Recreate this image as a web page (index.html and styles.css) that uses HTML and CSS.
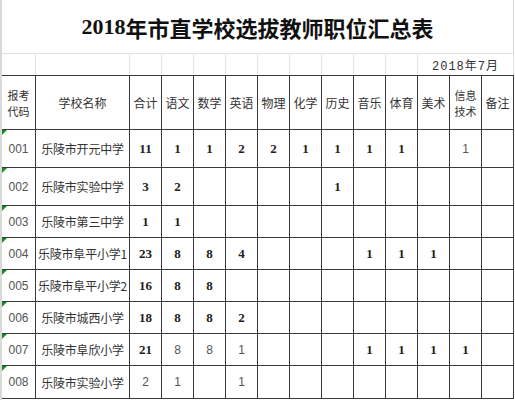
FILE: index.html
```html
<!DOCTYPE html>
<html lang="zh">
<head>
<meta charset="utf-8">
<link rel="stylesheet" href="styles.css">
</head>
<body>
<div class="sheet">
  <div class="title"><span class="num">2018</span><span class="cjk">年市直学校选拔教师职位汇总表</span></div>
  <div class="daterow">
    <div></div><div></div><div></div><div></div><div></div><div></div><div></div><div></div><div></div><div></div><div></div>
    <div class="date">2018年7月</div>
  </div>
  <div class="table">
    <div class="hd two"><span>报考</span><span>代码</span></div><div class="hd">学校名称</div><div class="hd">合计</div><div class="hd">语文</div><div class="hd">数学</div><div class="hd">英语</div><div class="hd">物理</div><div class="hd">化学</div><div class="hd">历史</div><div class="hd">音乐</div><div class="hd">体育</div><div class="hd">美术</div><div class="hd two"><span>信息</span><span>技术</span></div><div class="hd">备注</div>

    <div class="code">001</div><div class="name">乐陵市开元中学</div><div class="b">11</div><div class="b">1</div><div class="b">1</div><div class="b">2</div><div class="b">2</div><div class="b">1</div><div class="b">1</div><div class="b">1</div><div class="b">1</div><div></div><div class="t">1</div><div></div>

    <div class="code">002</div><div class="name">乐陵市实验中学</div><div class="b">3</div><div class="b">2</div><div></div><div></div><div></div><div></div><div class="b">1</div><div></div><div></div><div></div><div></div><div></div>

    <div class="code">003</div><div class="name">乐陵市第三中学</div><div class="b">1</div><div class="b">1</div><div></div><div></div><div></div><div></div><div></div><div></div><div></div><div></div><div></div><div></div>

    <div class="code">004</div><div class="name">乐陵市阜平小学1</div><div class="b">23</div><div class="b">8</div><div class="b">8</div><div class="b">4</div><div></div><div></div><div></div><div class="b">1</div><div class="b">1</div><div class="b">1</div><div></div><div></div>

    <div class="code">005</div><div class="name">乐陵市阜平小学2</div><div class="b">16</div><div class="b">8</div><div class="b">8</div><div></div><div></div><div></div><div></div><div></div><div></div><div></div><div></div><div></div>

    <div class="code">006</div><div class="name">乐陵市城西小学</div><div class="b">18</div><div class="b">8</div><div class="b">8</div><div class="b">2</div><div></div><div></div><div></div><div></div><div></div><div></div><div></div><div></div>

    <div class="code">007</div><div class="name">乐陵市阜欣小学</div><div class="b">21</div><div class="t">8</div><div class="t">8</div><div class="t">1</div><div></div><div></div><div></div><div class="b">1</div><div class="b">1</div><div class="b">1</div><div class="b">1</div><div></div>

    <div class="code">008</div><div class="name">乐陵市实验小学</div><div class="t">2</div><div class="t">1</div><div></div><div class="t">1</div><div></div><div></div><div></div><div></div><div></div><div></div><div></div><div></div>
  </div>
</div>
</body>
</html>
```

FILE: styles.css
```css
html, body {
  margin: 0;
  padding: 0;
  background: #fff;
}
body {
  font-family: "Noto Sans CJK SC", "Noto Sans", sans-serif;
  color: #333;
}
.sheet {
  width: 515px;
  height: 400px;
  border-left: 2px solid #d9d9d9;
  box-sizing: border-box;
  overflow: hidden;
}
.title {
  width: 511px;
  height: 53px;
  border-bottom: 1px solid #e2e2e2;
  border-right: 1px solid #d6d6d6;
  display: flex;
  align-items: center;
  justify-content: center;
  font-weight: bold;
  font-size: 22px;
  color: #111;
}
.title .num {
  font-family: "Liberation Serif", serif;
  font-size: 22px;
}
.title .cjk {
  font-family: "Noto Sans CJK SC", sans-serif;
  font-size: 22px;
}
.daterow {
  display: grid;
  grid-template-columns: 33px 93px repeat(12, 31px);
  grid-template-rows: 21px;
  column-gap: 1px;
  background: #e2e2e2;
  padding-right: 1px;
  width: 511px;
}
.daterow > div {
  background: #fff;
}
.daterow .date {
  grid-column: span 3;
  display: flex;
  align-items: flex-end;
  justify-content: flex-end;
  padding-right: 14px;
  font-family: "Liberation Mono", "Noto Sans CJK SC", monospace;
  font-size: 12px;
  letter-spacing: 1px;
  line-height: 16px;
  color: #333;
}
.table {
  display: grid;
  grid-template-columns: 33px 93px repeat(12, 31px);
  grid-template-rows: 53px 37px 37px repeat(5, 31px) 32px;
  gap: 1px;
  padding: 1px 1px 1px 0;
  background: #3a3a3a;
  width: 511px;
}
.table > div {
  background: #fff;
  display: flex;
  align-items: center;
  justify-content: center;
  text-align: center;
  font-size: 12px;
}
.hd {
  color: #333;
  font-size: 12px;
}
.table > .hd.two {
  flex-direction: column;
  font-size: 11px;
  line-height: 16px;
}
.hd.two span {
  display: block;
}
.code {
  position: relative;
  font-family: "Liberation Sans", sans-serif;
  font-size: 11px;
  color: #555;
}
.code::before {
  content: "";
  position: absolute;
  left: 0;
  top: 0;
  border-top: 5px solid #1d8a1d;
  border-right: 5px solid transparent;
}
.name {
  color: #333;
  white-space: nowrap;
  letter-spacing: -0.2px;
}
.table > .b {
  font-family: "Liberation Serif", serif;
  font-weight: bold;
  font-size: 13px;
  color: #222;
}
.table > .t {
  font-family: "Liberation Sans", sans-serif;
  font-size: 12px;
  color: #555;
}
```
